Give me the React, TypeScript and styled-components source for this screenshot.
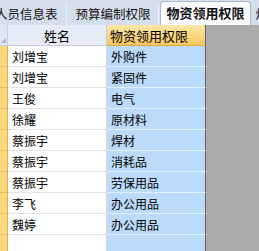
import styled, { createGlobalStyle } from 'styled-components';

const GlobalStyle = createGlobalStyle`
  html, body {
    margin: 0;
    padding: 0;
    overflow: hidden;
    background: #ababab;
  }
  body {
    font-family: "Noto Sans CJK SC", "DejaVu Sans", sans-serif;
  }
`;

const Window = styled.div`
  width: 259px;
  height: 251px;
  overflow: hidden;
  display: flex;
  flex-direction: column;
  background: #ababab;
`;

const TabBar = styled.div`
  height: 25px;
  flex: none;
  display: flex;
  align-items: flex-end;
  background: #d5dfeb;
  margin-left: -12px;
  white-space: nowrap;
`;

const Tab = styled.div<{ $active?: boolean; $padL: number; $padR: number }>`
  flex: none;
  box-sizing: border-box;
  height: ${(p) => (p.$active ? 24 : 23)}px;
  padding: 0 ${(p) => p.$padR}px 2px ${(p) => p.$padL}px;
  display: flex;
  align-items: center;
  font-size: ${(p) => (p.$active ? 13 : 12.5)}px;
  font-weight: ${(p) => (p.$active ? 700 : 400)};
  color: #111;
  background: ${(p) => (p.$active ? '#fbfcfe' : 'transparent')};
  border-radius: 4px 4px 0 0;
  border: 1px solid ${(p) => (p.$active ? '#aab9cd' : 'transparent')};
  border-bottom: none;
  box-shadow: ${(p) => (p.$active ? 'none' : 'inset -1px 0 0 #e9eff6')};
`;

const Sheet = styled.div`
  flex: 1;
  display: flex;
  flex-direction: column;
`;

const Row = styled.div`
  display: flex;
  height: 21px;
  flex: none;
`;

const Selector = styled.div<{ $header?: boolean }>`
  position: relative;
  width: 8px;
  box-sizing: border-box;
  flex: none;
  background: ${(p) => (p.$header ? '#dde6f1' : '#f9d77d')};
  border-right: 1px solid ${(p) => (p.$header ? '#c3cedc' : '#d9ae4c')};
  border-bottom: 1px solid ${(p) => (p.$header ? '#c3cedc' : '#e9bc58')};
`;

const CornerMark = styled.div`
  position: absolute;
  right: 1px;
  bottom: 2px;
  width: 0;
  height: 0;
  border-left: 5px solid transparent;
  border-bottom: 5px solid #a9b3c0;
`;

const Cell = styled.div<{ $width: number; $selected?: boolean; $header?: boolean; $center?: boolean }>`
  width: ${(p) => p.$width}px;
  flex: none;
  box-sizing: border-box;
  display: flex;
  align-items: center;
  justify-content: ${(p) => (p.$center ? 'center' : 'flex-start')};
  padding-left: ${(p) => (p.$center ? 0 : p.$header ? 3 : 4)}px;
  font-size: ${(p) => (p.$header ? 13 : 12)}px;
  color: #000;
  white-space: nowrap;
  overflow: hidden;
  background: ${(p) =>
    p.$header
      ? p.$selected
        ? 'linear-gradient(#fde7a8, #f8c65e)'
        : '#e5ecf6'
      : p.$selected
        ? '#bcdaf9'
        : '#ffffff'};
  border-bottom: 1px solid
    ${(p) => (p.$header ? (p.$selected ? '#e2a93c' : '#c3cedc') : p.$selected ? '#e1eefc' : '#e3e3e3')};
  border-right: 1px solid
    ${(p) => (p.$selected ? '#5f6266' : p.$header ? '#c3cedc' : '#d8d8d8')};
`;

const rows = [
  ['刘增宝', '外购件'],
  ['刘增宝', '紧固件'],
  ['王俊', '电气'],
  ['徐耀', '原材料'],
  ['蔡振宇', '焊材'],
  ['蔡振宇', '消耗品'],
  ['蔡振宇', '劳保用品'],
  ['李飞', '办公用品'],
  ['魏婷', '办公用品'],
  ['', ''],
];

const App = () => {
  return (
    <Window>
      <GlobalStyle />
      <TabBar>
        <Tab $padL={6} $padR={9}>人员信息表</Tab>
        <Tab $padL={7} $padR={8}>预算编制权限</Tab>
        <Tab $active $padL={6} $padR={5}>物资领用权限</Tab>
        <Tab $padL={4} $padR={6}>烟草领用权限</Tab>
      </TabBar>
      <Sheet>
        <Row>
          <Selector $header>
            <CornerMark />
          </Selector>
          <Cell $header $center $width={99}>姓名</Cell>
          <Cell $header $selected $width={99}>物资领用权限</Cell>
        </Row>
        {rows.map(([name, kind], i) => (
          <Row key={i}>
            <Selector />
            <Cell $width={99}>{name}</Cell>
            <Cell $selected $width={99}>{kind}</Cell>
          </Row>
        ))}
      </Sheet>
    </Window>
  );
};

export default App;
